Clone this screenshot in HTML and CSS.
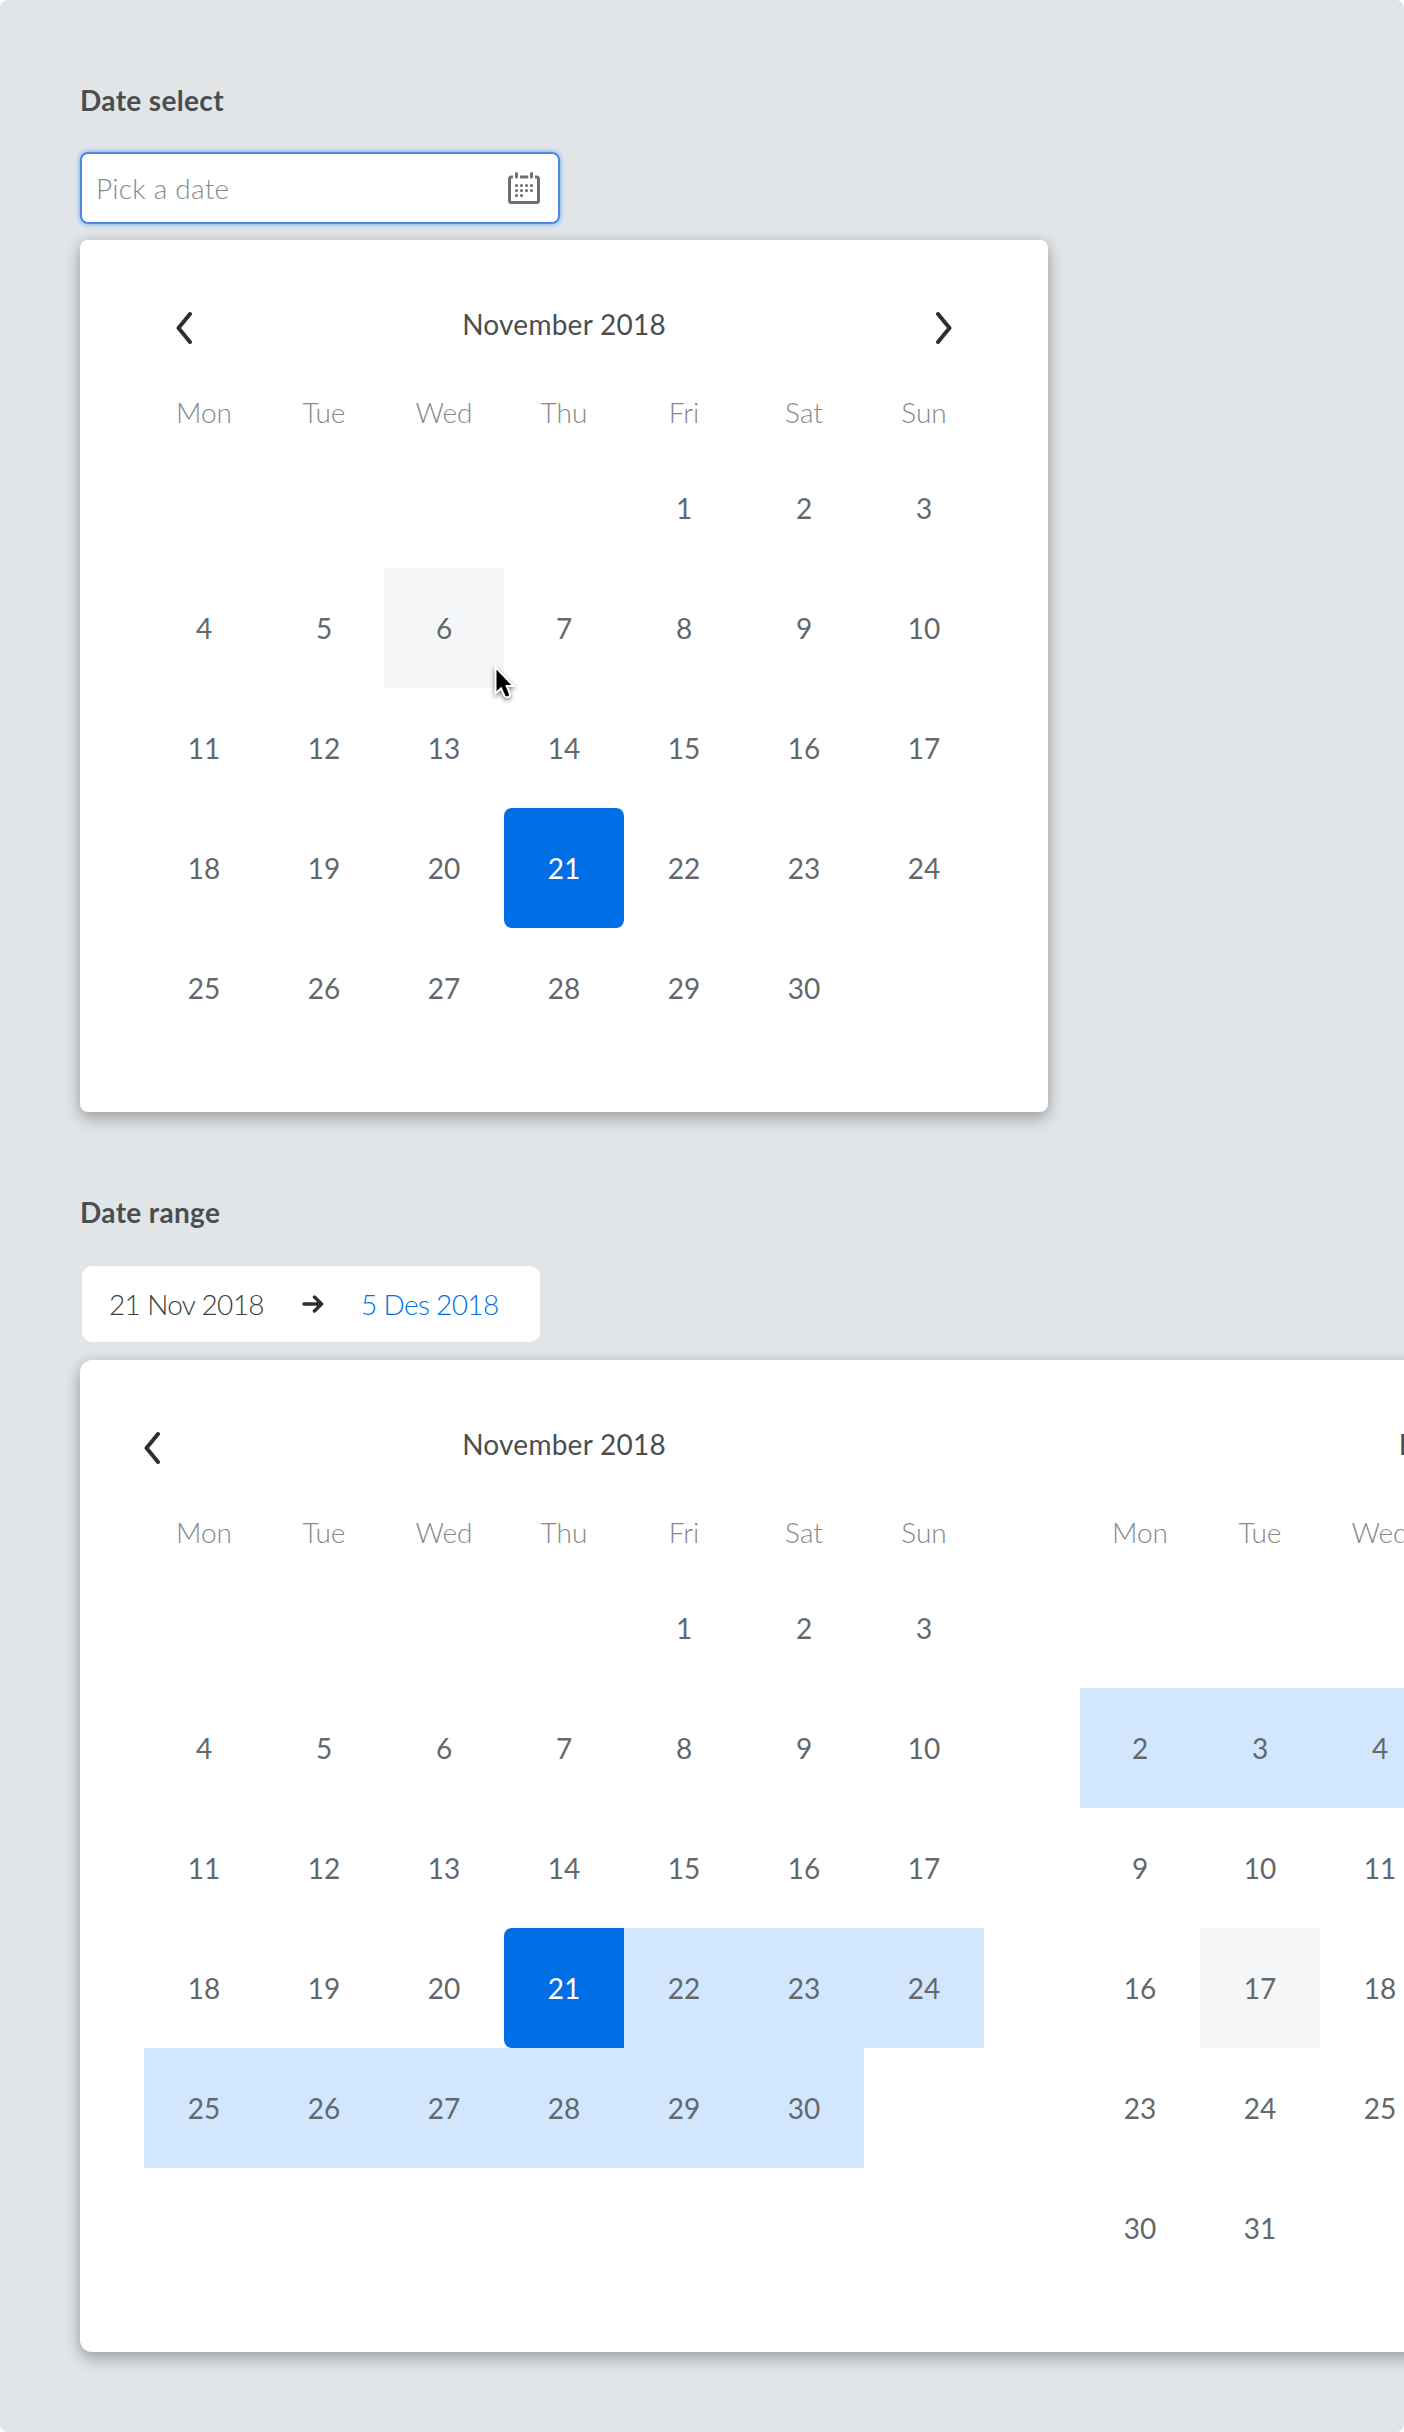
FILE: index.html
```html
<!DOCTYPE html>
<html lang="en">
<head>
<meta charset="utf-8">
<title>Date pickers</title>
<link rel="stylesheet" href="styles.css">
</head>
<body>
<main class="page">
  <section class="block">
    <h2 class="heading">Date select</h2>
    <div class="field">
      <span class="placeholder">Pick a date</span>
      <svg class="icon" width="32" height="32" viewBox="0 0 32 32" fill="none">
        <path d="M5 5H3.500Q1.500 5 1.500 7V28.500Q1.500 30.500 3.500 30.500H28.500Q30.500 30.500 30.500 28.500V7Q30.500 5 28.500 5H27M12 5H20.300" stroke="#6c7073" stroke-width="3"/>
        <path d="M8.500 1.500V5M23.500 1.500V5" stroke="#6c7073" stroke-width="3" stroke-linecap="round"/>
        <path d="M8.500 13.500h15.100M8.500 18.500h15.100M8.500 23.500h5.100" stroke="#6c7073" stroke-width="3.200" stroke-linecap="round" stroke-dasharray="0 5"/>
      </svg>
    </div>
    <div class="panel">
      <div class="month">
        <div class="bar">
          <svg class="chev chev-inset" width="16" height="32" viewBox="0 0 16 32"><path d="M14 2L2.500 16L14 30"/></svg>
          <span>November 2018</span>
          <svg class="chev chev-right" width="16" height="32" viewBox="0 0 16 32"><path d="M2 2L13.500 16L2 30"/></svg>
        </div>
        <div class="week"><span>Mon</span><span>Tue</span><span>Wed</span><span>Thu</span><span>Fri</span><span>Sat</span><span>Sun</span></div>
        <div class="days">
          <span class="from-fri">1</span><span>2</span><span>3</span>
          <span>4</span><span>5</span><span class="hover">6
            <svg class="cursor" width="40" height="48" viewBox="0 0 40 48"><path d="M8.500 6V32.500L14 27.500L17.500 35Q19 37 21.500 36Q23.500 35 23 33L19.700 25H26.500Z"/></svg></span><span>7</span><span>8</span><span>9</span><span>10</span>
          <span>11</span><span>12</span><span>13</span><span>14</span><span>15</span><span>16</span><span>17</span>
          <span>18</span><span>19</span><span>20</span><span class="selected">21</span><span>22</span><span>23</span><span>24</span>
          <span>25</span><span>26</span><span>27</span><span>28</span><span>29</span><span>30</span>
        </div>
      </div>
    </div>
  </section>

  <section class="block">
    <h2 class="heading">Date range</h2>
    <div class="range">
      <span class="from">21 Nov 2018</span>
      <svg class="arrow" width="22" height="18" viewBox="0 0 22 18"><path d="M2 9H19M12.500 2L19.500 9L12.500 16"/></svg>
      <span class="to">5 Des 2018</span>
    </div>
    <div class="panel panel-wide">
      <div class="month">
        <div class="bar">
          <svg class="chev" width="16" height="32" viewBox="0 0 16 32"><path d="M14 2L2.500 16L14 30"/></svg>
          <span>November 2018</span>
        </div>
        <div class="week"><span>Mon</span><span>Tue</span><span>Wed</span><span>Thu</span><span>Fri</span><span>Sat</span><span>Sun</span></div>
        <div class="days">
          <span class="from-fri">1</span><span>2</span><span>3</span>
          <span>4</span><span>5</span><span>6</span><span>7</span><span>8</span><span>9</span><span>10</span>
          <span>11</span><span>12</span><span>13</span><span>14</span><span>15</span><span>16</span><span>17</span>
          <span>18</span><span>19</span><span>20</span><span class="selected start">21</span><span class="in">22</span><span class="in">23</span><span class="in">24</span>
          <span class="in">25</span><span class="in">26</span><span class="in">27</span><span class="in">28</span><span class="in">29</span><span class="in">30</span>
        </div>
      </div>
      <div class="month">
        <div class="bar"><span>December 2018</span></div>
        <div class="week"><span>Mon</span><span>Tue</span><span>Wed</span></div>
        <div class="days">
          <span class="blank-row"></span>
          <span class="mon in">2</span><span class="in">3</span><span class="in">4</span>
          <span class="mon">9</span><span>10</span><span>11</span>
          <span class="mon">16</span><span class="hover">17</span><span>18</span>
          <span class="mon">23</span><span>24</span><span>25</span>
          <span class="mon">30</span><span>31</span>
        </div>
      </div>
    </div>
  </section>
</main>
</body>
</html>
```
FILE: styles.css
```css
* { box-sizing: border-box; }
body {
  margin: 0;
  background: #fff;
  font-family: Lato, "Open Sans", sans-serif;
  font-size: 28px;
  line-height: 40px;
  color: #4a4e51;
}
.page {
  width: 1404px;
  height: 2432px;
  padding: 80px 0 0 80px;
  overflow: hidden;
  background: #e1e5e8;
  border-radius: 8px;
}
.block { display: flex; flex-direction: column; align-items: flex-start; }
.block + .block { margin-top: 80px; }
.heading {
  margin: 0;
  height: 40px;
  font-size: 28px;
  font-weight: 700;
  letter-spacing: .35px;
  white-space: nowrap;
}
.field {
  display: flex;
  align-items: center;
  justify-content: space-between;
  width: 480px;
  height: 72px;
  margin-top: 32px;
  padding: 0 18px 0 14px;
  background: #fff;
  border: 2px solid #5088e2;
  border-radius: 8px;
  box-shadow: 0 0 4px 1px #7fb6f5;
}
.placeholder { color: #83898d; font-weight: 300; letter-spacing: .25px; }
.panel {
  display: flex;
  width: 968px;
  height: 872px;
  margin-top: 16px;
  padding: 0 64px;
  background: #fff;
  border-radius: 8px;
  box-shadow: 0 8px 16px rgba(0, 0, 0, .2), 0 2px 14px rgba(0, 0, 0, .16);
}
.panel-wide { width: 1904px; height: 992px; margin-top: 18px; gap: 96px; border-radius: 12px; }
.month { width: 840px; flex: none; }
.bar {
  display: grid;
  grid-template-columns: 100px 1fr 100px;
  align-items: center;
  height: 40px;
  margin-top: 64px;
  text-align: center;
}
.bar span { grid-column: 2; grid-row: 1; letter-spacing: .25px; }
.chev, .arrow { fill: none; stroke: #2c3035; stroke-width: 4; stroke-linecap: round; stroke-linejoin: round; }
.chev { grid-row: 1; margin-top: 8px; }
.chev-inset { margin-left: 32px; }
.chev-right { grid-column: 3; justify-self: end; margin-right: 32px; }
.week, .days { display: grid; grid-template-columns: repeat(7, 120px); text-align: center; }
.week { margin-top: 48px; height: 56px; color: #83898d; font-weight: 300; }
.days { grid-auto-rows: 120px; line-height: 120px; color: #64686b; }
.from-fri { grid-column: 5; }
.mon { grid-column: 1; }
.blank-row { grid-column: 1 / -1; }
.hover { position: relative; background: #f5f6f8; }
.selected { background: #006fe6; color: #fff; border-radius: 8px; }
.start { border-radius: 8px 0 0 8px; }
.in { background: #d2e7fe; }
.cursor {
  position: absolute;
  left: 103px;
  top: 93px;
  z-index: 1;
  fill: #000;
  stroke: #fff;
  stroke-width: 2;
  filter: drop-shadow(0 2px 2px rgba(0, 0, 0, .5));
}
.range {
  display: flex;
  align-items: center;
  width: 458px;
  height: 76px;
  margin: 34px 0 0 2px;
  padding-left: 27px;
  background: #fff;
  border-radius: 10px;
  color: #3a3e41;
  font-weight: 300;
  letter-spacing: -.65px;
}
.from { width: 193px; }
.arrow { margin-right: 37px; stroke-width: 3.5; }
.to { color: #006fe6; }
```
